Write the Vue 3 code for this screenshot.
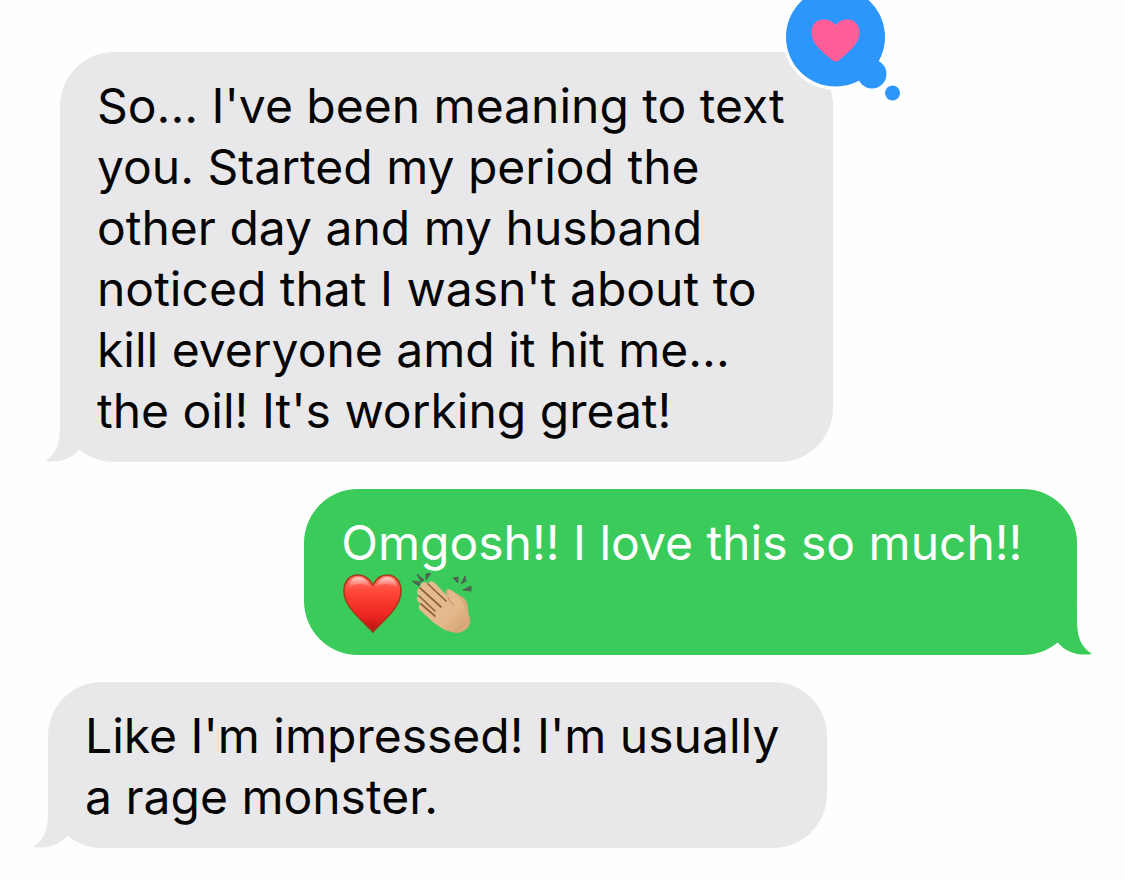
<script setup>
const messages = [
  {
    id: 1,
    side: 'received',
    loved: true,
    lines: [
      "So... I've been meaning to text",
      'you. Started my period the',
      'other day and my husband',
      "noticed that I wasn't about to",
      'kill everyone amd it hit me...',
      "the oil! It's working great!",
    ],
  },
  { id: 2, side: 'sent', emoji: true, lines: ['Omgosh!! I love this so much!!'] },
  { id: 3, side: 'received', last: true, lines: ["Like I'm impressed! I'm usually", 'a rage monster.'] },
]
</script>

<template>
  <main class="thread">
    <article v-for="m in messages" :key="m.id" class="bubble" :class="[m.side, { last: m.last }]">
      <svg class="tail" viewBox="0 0 50 50" aria-hidden="true">
        <path d="M15 0V14C15 31 12 41 0 49C13 51 25 48 34 38L50 20V0Z" />
      </svg>
      <p class="text">
        <span v-for="line in m.lines" :key="line" class="line">{{ line }}</span>
        <span v-if="m.emoji" class="line emojis">
          <svg viewBox="0 0 62 62" role="img" aria-label="Red heart">
            <defs>
              <linearGradient id="heartFill" x1="0" y1="0" x2="0" y2="1">
                <stop offset="0" stop-color="#ff7768" />
                <stop offset=".3" stop-color="#ff4538" />
                <stop offset=".7" stop-color="#ee2720" />
                <stop offset="1" stop-color="#b80f10" />
              </linearGradient>
              <linearGradient id="heartShine" x1="0" y1="0" x2="0" y2="1">
                <stop offset="0" stop-color="#fff" stop-opacity=".65" />
                <stop offset="1" stop-color="#fff" stop-opacity="0" />
              </linearGradient>
            </defs>
            <path d="M32 12C28 5 22 2 17 2C8 2 3 9 3 18C3 34 20 46 32 59C44 46 60 34 60 18C60 9 55 2 46 2C40 2 35 6 32 12Z" fill="url(#heartFill)" stroke="#a63a18" stroke-width="1.6" />
            <path d="M8 15C8 8 12 4 17 4C23 4 27 8 29 14C23 10 14 10 8 15ZM35 14C37 8 41 4 46 4C52 4 56 8 56 15C50 10 41 10 35 14Z" fill="url(#heartShine)" />
          </svg>
          <svg viewBox="0 0 62 62" role="img" aria-label="Clapping hands">
            <defs>
              <linearGradient id="skin" x1="0" y1="0" x2="1" y2="1">
                <stop offset="0" stop-color="#e5bd91" />
                <stop offset=".65" stop-color="#e4b98b" />
                <stop offset="1" stop-color="#cf9a68" />
              </linearGradient>
            </defs>
            <path d="M1 8L9 9L8 13ZM6 1L13 7L10 9ZM15 1L20 0L15 7ZM42 5L47 4V10ZM54 3L55 8L50 11ZM52 17L60 13V18Z" fill="#4d6650" stroke="#4d6650" stroke-width="1" />
            <path d="M36 24C33 18 36 14 40 17L53 25C59 32 56 40 59 46C60 53 55 59 45 60L36 55Z" fill="#dbaa79" />
            <path d="M9 14C10 9 14 8 17 11C18 7 22 8 25 11L37 24C37 20 36 16 39 17C43 19 47 23 50 27C55 34 54 40 59 44C57 51 50 55 46 60C37 59 29 55 22 49L11 39C7 36 7 32 10 31C5 28 5 24 8 23C5 20 6 16 9 14Z" fill="url(#skin)" />
            <path d="M8 23L24 38M10 31L24 43M9 15L30 34M17 11L35 28" fill="none" stroke="#8f623d" stroke-width="1.7" stroke-linecap="round" />
            <path d="M37 24C38 28 40 30 43 32" fill="none" stroke="#c18b5b" stroke-width="1" />
          </svg>
        </span>
      </p>
      <svg v-if="m.loved" class="reaction" viewBox="0 0 130 110" role="img" aria-label="Loved">
        <g fill="#fff">
          <circle cx="55.5" cy="37" r="53" />
          <circle cx="92" cy="74" r="18" />
          <circle cx="112.5" cy="93" r="11" />
        </g>
        <g fill="#2c96fb">
          <circle cx="55.5" cy="37" r="49.5" />
          <circle cx="92" cy="74" r="14.5" />
          <circle cx="112.5" cy="93" r="7.5" />
        </g>
        <path d="M55.500 25C52 21 48 19.500 44 19.500C36 19.500 31 25.500 31.500 33.500C32 45 44 53 52 60C54.500 62 57 62 59.500 60C67 53 79 45 79.500 33.500C80 25.500 75 19.500 67.500 19.500C63 19.500 59 21 55.500 25Z" fill="#ff5e98" />
      </svg>
    </article>
  </main>
</template>

<style>
body {
  margin: 0;
  background: #fefefe;
}
</style>

<style scoped>
.thread {
  display: flex;
  flex-direction: column;
  gap: 27px;
  padding: 52px 48px 32px;
  font-family: Inter, "Liberation Sans", sans-serif;
  font-size: 48px;
  line-height: 61px;
  color: #050505;
}
.bubble {
  position: relative;
  box-sizing: border-box;
  width: 75.1%;
  padding: 23px 0 21px 37px;
  border-radius: 54px;
}
.received {
  align-self: flex-start;
  margin-left: 12px;
  background: #e8e8ea;
  fill: #e8e8ea;
}
.received.last {
  width: 75.7%;
  margin-left: 0;
}
.sent {
  align-self: flex-end;
  background: #3bcb5b;
  fill: #3bcb5b;
  color: #fff;
}
.text {
  margin: 0;
}
.line {
  display: block;
  white-space: nowrap;
}
.emojis {
  display: flex;
  gap: 8px;
  height: 61px;
}
.emojis svg {
  width: 62px;
  height: 62px;
}
.tail {
  position: absolute;
  left: -15px;
  bottom: 0;
  width: 50px;
  height: 50px;
}
.sent .tail {
  left: auto;
  right: -15px;
  transform: scaleX(-1);
}
.reaction {
  position: absolute;
  top: -52px;
  right: -77px;
  width: 130px;
  height: 110px;
}
</style>
